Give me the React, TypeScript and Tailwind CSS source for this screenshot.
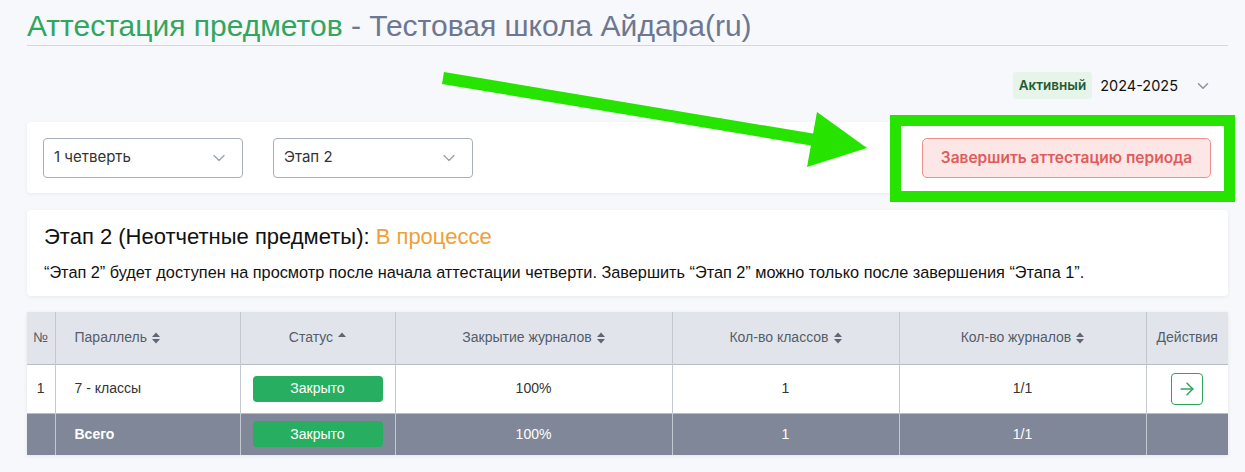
import { ChevronDown, ArrowRight } from "lucide-react";

const sans = "font-['Liberation_Sans',Arial,sans-serif]";
const inter = "font-['Inter',sans-serif]";

function SortIcon({ up = false }: { up?: boolean }) {
    return (
        <svg width="8" height="12" viewBox="0 0 8 12" className="inline-block ml-[5px] -mt-[2px]">
            <path d="M0 5 L4 0.5 L8 5 Z" fill="#5f6673" />
            {!up && <path d="M0 7 L4 11.5 L8 7 Z" fill="#5f6673" />}
        </svg>
    );
}

function Select({ label }: { label: string }) {
    return (
        <div className={`${inter} flex items-center justify-between w-[200px] h-[40px] border border-[#a9b0ba] rounded-[4px] pl-[10px] pr-[13px] text-[15px] text-[#333]`}>
            <span>{label}</span>
            <ChevronDown size={20} strokeWidth={1.6} color="#9aa3ae" />
        </div>
    );
}

function StatusBadge() {
    return (
        <div className="mx-auto w-[130px] h-[26px] rounded-[4px] bg-[#27ae60] text-white text-[14px] flex items-center justify-center">
            Закрыто
        </div>
    );
}

export default function App() {
    const head = "border-x border-[#c4c9d1] font-normal text-[14px] text-[#555d6a] h-[52px]";
    const cell = "border-x border-[#c4c9d1] text-[14px]";

    return (
        <div className={`${sans} relative min-h-[472px] bg-[#f6f8fb] pl-[27px] pr-[17px]`}>
            {/* title */}
            <div className="pt-[11px] pb-[4px] border-b border-[#d3d8de]">
                <h1 className="text-[30px] leading-[30px]">
                    <span className="text-[#32a65f]">Аттестация предметов</span>
                    <span className="text-[#6d7791]"> - Тестовая школа Айдара(ru)</span>
                </h1>
            </div>

            {/* year */}
            <div className={`${inter} flex justify-end items-start gap-[8px] pt-[26px] pr-[16px] h-[76px]`}>
                <span className="bg-[#e6f4ea] text-[#1f5b34] font-semibold text-[13.5px] px-[6px] h-[27px] flex items-center rounded-[3px]">
                    Активный
                </span>
                <span className="text-[14.5px] leading-[27px] text-[#111]">2024-2025</span>
                <ChevronDown size={18} strokeWidth={2} color="#8a93a0" className="ml-[8px] mt-[5px]" />
            </div>

            {/* filters */}
            <div className="bg-white rounded-[4px] shadow-[0_1px_4px_rgba(0,0,0,0.06)] h-[71px] flex items-center pl-[16px] pr-[17px] gap-[30px]">
                <Select label="1 четверть" />
                <Select label="Этап 2" />
                <button className={`${inter} ml-auto w-[289px] h-[40px] rounded-[5px] border border-[#ee8f8f] bg-[#fde6e6] text-[#e05c5c] font-semibold text-[15.5px]`}>
                    Завершить аттестацию периода
                </button>
            </div>

            {/* stage info */}
            <div className="bg-white rounded-[4px] shadow-[0_1px_4px_rgba(0,0,0,0.06)] mt-[17px] h-[86px] pl-[17px] pt-[14px]">
                <div className="text-[22px] leading-[26px] text-[#111]">
                    Этап 2 (Неотчетные предметы): <span className="text-[#f0a035]">В процессе</span>
                </div>
                <div className="text-[16.3px] leading-[20px] text-[#111] mt-[12px]">
                    “Этап 2” будет доступен на просмотр после начала аттестации четверти. Завершить “Этап 2” можно только после завершения “Этапа 1”.
                </div>
            </div>

            {/* table */}
            <table className="mt-[16px] w-[1201px] border-collapse table-fixed shadow-[0_1px_4px_rgba(0,0,0,0.08)]">
                <colgroup>
                    <col className="w-[28px]" />
                    <col className="w-[185px]" />
                    <col className="w-[155px]" />
                    <col className="w-[277px]" />
                    <col className="w-[227px]" />
                    <col className="w-[247px]" />
                    <col className="w-[82px]" />
                </colgroup>
                <thead>
                    <tr className="bg-[#e1e5eb] border-b border-[#b8bec8]">
                        <th className={`${head} border-l-0 text-center`}>№</th>
                        <th className={`${head} text-left pl-[19px]`}>Параллель<SortIcon /></th>
                        <th className={`${head} text-center`}>Статус<SortIcon up /></th>
                        <th className={`${head} text-center`}>Закрытие журналов<SortIcon /></th>
                        <th className={`${head} text-center`}>Кол-во классов<SortIcon /></th>
                        <th className={`${head} text-center`}>Кол-во журналов<SortIcon /></th>
                        <th className={`${head} border-r-0 text-center`}>Действия</th>
                    </tr>
                </thead>
                <tbody>
                    <tr className="bg-white h-[49px] text-[#333] border-b border-[#b8bec8]">
                        <td className={`${cell} border-l-0 text-center`}>1</td>
                        <td className={`${cell} pl-[19px]`}>7 - классы</td>
                        <td className={cell}><StatusBadge /></td>
                        <td className={`${cell} text-center`}>100%</td>
                        <td className={`${cell} text-center`}>1</td>
                        <td className={`${cell} text-center`}>1/1</td>
                        <td className={`${cell} border-r-0`}>
                            <div className="mx-auto w-[32px] h-[32px] border border-[#2ea55f] rounded-[4px] flex items-center justify-center">
                                <ArrowRight size={20} strokeWidth={1.8} color="#2ea55f" />
                            </div>
                        </td>
                    </tr>
                    <tr className="bg-[#7f8799] h-[42px] text-white">
                        <td className={`${cell} border-l-0`}></td>
                        <td className={`${cell} pl-[19px] font-bold`}>Всего</td>
                        <td className={cell}><StatusBadge /></td>
                        <td className={`${cell} text-center`}>100%</td>
                        <td className={`${cell} text-center`}>1</td>
                        <td className={`${cell} text-center`}>1/1</td>
                        <td className={`${cell} border-r-0`}></td>
                    </tr>
                </tbody>
            </table>

            {/* annotation: highlight box */}
            <div className="absolute left-[890px] top-[115px] w-[345px] h-[87px] border-[11px] border-[#26e300] pointer-events-none" />

            {/* annotation: arrow */}
            <svg className="absolute left-0 top-0 pointer-events-none" width="1245" height="472">
                <line x1="443" y1="78" x2="815" y2="140" stroke="#26e300" strokeWidth="12" />
                <polygon points="817,112 867,148 807,167" fill="#26e300" />
            </svg>
        </div>
    );
}
